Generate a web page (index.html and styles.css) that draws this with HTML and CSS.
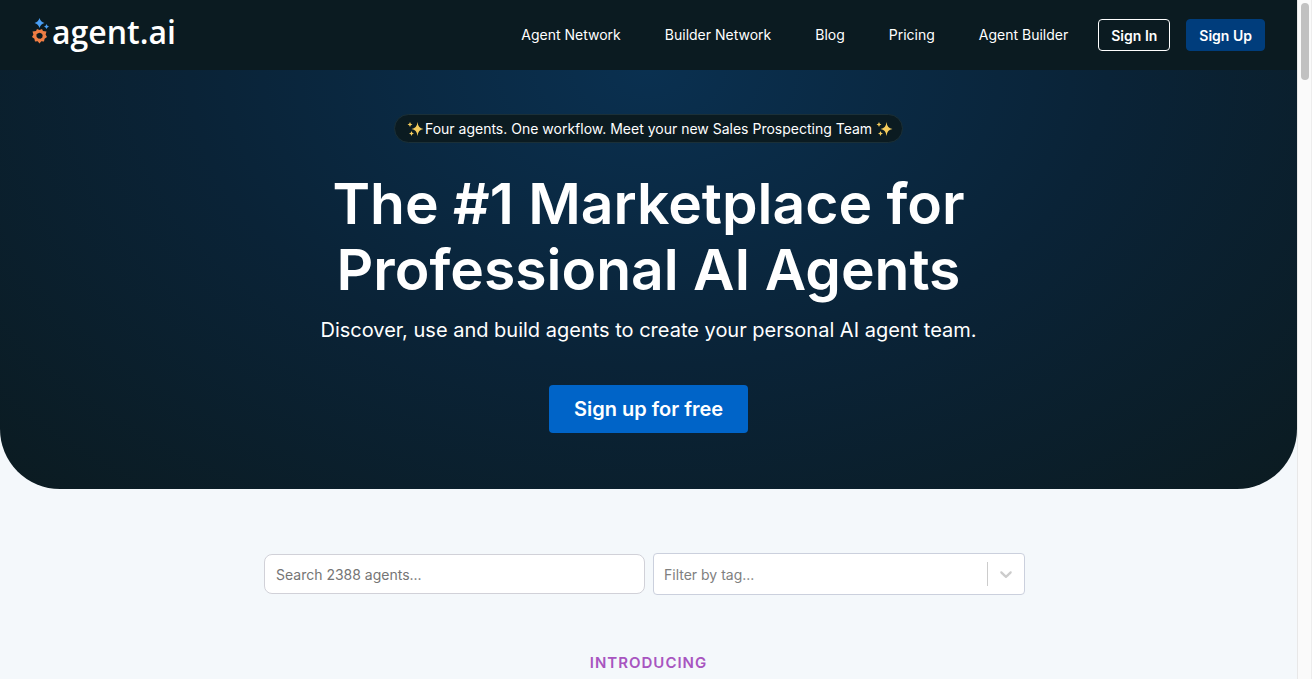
FILE: index.html
```
<!DOCTYPE html>
<html lang="en">
<head>
  <meta charset="UTF-8">
  <meta name="viewport" content="width=device-width, initial-scale=1">
  <title>agent.ai | The #1 Marketplace for Professional AI Agents</title>
  <link rel="stylesheet" href="styles.css">
</head>
<body>

<div class="page">
  <header class="navbar">
    <a class="logo" href="/">
      <svg class="logo-mark" width="18" height="28" viewBox="0 0 18 28" aria-hidden="true">
        <path fill="#4a9ff5" d="M7.500 0 Q8.600 4 12.500 5 Q8.600 6 7.500 10 Q6.400 6 2.500 5 Q6.400 4 7.500 0Z"/>
        <path fill="#4a9ff5" d="M14.500 6 Q15 8 17 8.500 Q15 9 14.500 11 Q14 9 12 8.500 Q14 8 14.500 6Z"/>
        <path fill="#ee7d44" fill-rule="evenodd" d="M5 11 L7.500 12 L10 11 L11 13 L14.500 13.600 L13.600 16.500 L15 19 L12.600 20.700 L12 23.400 L9.300 23.200 L7.500 25.500 L5.700 23.200 L3 23.400 L2.400 20.700 L0 19 L1.400 16.500 L.500 13.600 L4 13Z M7.500 14.800 L5.600 15.400 L4.400 16.500 L4.600 19 L6.200 20.600 L8.600 20.800 L10.300 19.400 L10.700 17 L9.500 15.400Z"/>
      </svg>
      <span class="logo-text">agent.ai</span>
    </a>
    <nav class="nav-links">
      <a href="#">Agent Network</a>
      <a href="#">Builder Network</a>
      <a href="#">Blog</a>
      <a href="#">Pricing</a>
      <a href="#">Agent Builder</a>
    </nav>
    <div class="nav-buttons">
      <button class="btn btn-outline" type="button">Sign In</button>
      <button class="btn btn-solid" type="button">Sign Up</button>
    </div>
  </header>

  <section class="hero">
    <a class="banner" href="#">
      <svg class="sparkles" width="18" height="16" viewBox="0 0 18 16" aria-hidden="true"><use href="#sparkle"/></svg>
      <span>Four agents. One workflow. Meet your new Sales Prospecting Team</span>
      <svg class="sparkles sparkles-end" width="18" height="16" viewBox="0 0 18 16" aria-hidden="true">
        <g id="sparkle" fill="#f5cc5c">
          <path d="M10.500 1 Q11.100 7.400 16.500 8 Q11.100 8.600 10.500 15 Q9.900 8.600 4.500 8 Q9.900 7.400 10.500 1Z"/>
          <path d="M3 1 Q3.300 3.200 5.500 3.500 Q3.300 3.800 3 6 Q2.700 3.800 .500 3.500 Q2.700 3.200 3 1Z"/>
          <path d="M4.500 10 Q4.800 12.200 7 12.500 Q4.800 12.800 4.500 15 Q4.200 12.800 2 12.500 Q4.200 12.200 4.500 10Z"/>
        </g>
      </svg>
    </a>
    <h1>The #1 Marketplace for<br>Professional AI Agents</h1>
    <p>Discover, use and build agents to create your personal AI agent team.</p>
    <a class="cta" href="#">Sign up for free</a>
  </section>

  <main>
    <form class="filters">
      <input class="search" type="text" placeholder="Search 2388 agents..." aria-label="Search agents">
      <div class="select-wrap">
        <select class="tag-select" aria-label="Filter by tag">
          <option>Filter by tag...</option>
        </select>
        <div class="indicator">
          <svg width="20" height="20" viewBox="0 0 20 20" aria-hidden="true">
            <path fill="#ccc" d="M4.516 7.548c0.436-0.446 1.043-0.481 1.576 0l3.908 3.747 3.908-3.747c0.533-0.481 1.141-0.446 1.574 0 0.436 0.445 0.408 1.197 0 1.615-0.406 0.418-4.695 4.502-4.695 4.502-0.217 0.223-0.502 0.335-0.787 0.335s-0.570-0.112-0.789-0.335c0 0-4.287-4.084-4.695-4.502s-0.436-1.170 0-1.615z"/>
          </svg>
        </div>
      </div>
    </form>
    <h2 class="introducing">INTRODUCING</h2>
  </main>
</div>

<div class="scrollbar">
  <div class="scrollbar-thumb"></div>
</div>

</body>
</html>
```
FILE: styles.css
```
* {
  box-sizing: border-box;
}
body {
  margin: 0;
  display: flex;
  height: 100vh;
  overflow: hidden;
  font-family: Inter, "Liberation Sans", sans-serif;
  font-size: 14px;
  background: #f4f8fb;
}
a {
  color: inherit;
  text-decoration: none;
}
.page {
  flex: 1;
  min-width: 0;
}
.navbar {
  display: flex;
  align-items: center;
  height: 70px;
  padding: 0 32px;
  background: #0b1b21;
  color: #fff;
}
.logo {
  display: flex;
  align-items: center;
  gap: 2px;
  margin-right: auto;
  padding-bottom: 6px;
}
.logo-text {
  font-family: "Open Sans", sans-serif;
  font-size: 32px;
  font-weight: 600;
  line-height: 40px;
}
.nav-links {
  display: flex;
  gap: 44px;
  margin-right: 30px;
  line-height: 20px;
}
.nav-buttons {
  display: flex;
  gap: 16px;
}
.btn {
  height: 32px;
  padding: 0 12px;
  border: 1px solid #fff;
  border-radius: 4px;
  color: #fff;
  font: 600 14px Inter, sans-serif;
  cursor: pointer;
}
.btn-outline {
  background: transparent;
}
.btn-solid {
  background: #003d7c;
  border-color: #003d7c;
}
.hero {
  display: flex;
  flex-direction: column;
  align-items: center;
  padding: 44px 24px 56px;
  border-radius: 0 0 60px 60px;
  background: radial-gradient(ellipse at top, #0a3050 0%, #0a2337 50%, #0b1b21 100%);
  color: #fff;
  text-align: center;
}
.banner {
  display: flex;
  align-items: center;
  height: 29px;
  padding: 0 8px 0 12px;
  border: 1px solid #1b3038;
  border-radius: 15px;
  background: #0b1b21;
}
.sparkles-end {
  margin-left: 4px;
}
.hero h1 {
  margin: 28px 0 0;
  font-size: 57px;
  font-weight: 600;
  line-height: 66px;
}
.hero p {
  margin: 11px 0 0;
  font-size: 20px;
  line-height: 32px;
}
.cta {
  margin-top: 39px;
  padding: 0 25px;
  border-radius: 4px;
  background: #0064c8;
  font-size: 20px;
  font-weight: 600;
  line-height: 48px;
}
.filters {
  display: grid;
  grid-template-columns: 381fr 372fr;
  align-items: center;
  gap: 8px;
  max-width: 769px;
  margin: 64px auto 0;
  padding-right: 8px;
}
.search {
  width: 100%;
  height: 40px;
  padding: 0 11px;
  border: 1px solid #d1d1d8;
  border-radius: 8px;
  background: #fff;
  font: 14px Inter, sans-serif;
}
.search::placeholder {
  color: #757575;
}
.select-wrap {
  display: flex;
  align-items: center;
  height: 42px;
  border: 1px solid #cbd0dd;
  border-radius: 4px;
  background: #fff;
}
.tag-select {
  flex: 1;
  min-width: 0;
  padding: 0 10px;
  border: 0;
  appearance: none;
  background: transparent;
  color: #808080;
  font: 14px Inter, sans-serif;
}
.indicator {
  display: flex;
  padding: 2px 8px;
  border-left: 1px solid #ccc;
}
.introducing {
  margin: 56px 0 0;
  color: #a855c0;
  font-size: 15px;
  font-weight: 600;
  line-height: 24px;
  letter-spacing: 1px;
  text-align: center;
}
.scrollbar {
  width: 15px;
  padding: 3px;
  border-left: 1px solid #e8e8e8;
  border-right: 1px solid #ededed;
  background: #fafafa;
}
.scrollbar-thumb {
  width: 8px;
  height: 77px;
  border-radius: 4px;
  background: #c1c1c1;
}
```
